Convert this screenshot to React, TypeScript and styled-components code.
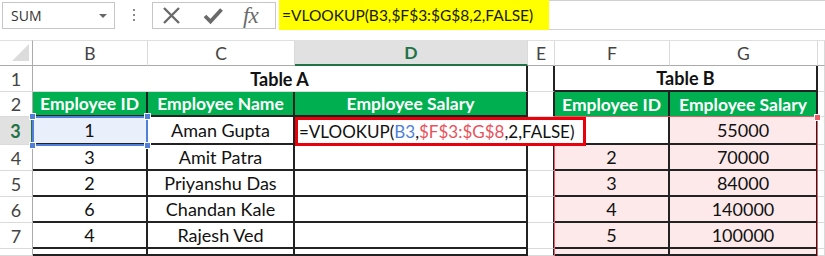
import styled, {createGlobalStyle} from "styled-components";

const GlobalStyle = createGlobalStyle`
  body {
    margin: 0;
    background: #ffffff;
    overflow: hidden;
    font-family: Lato, "Liberation Sans", sans-serif;
  }
`

const Bar = styled.div`
  display: flex;
  height: 30px;
`

const NameBox = styled.div`
  box-sizing: border-box;
  width: 113px;
  height: 27px;
  margin: 2px 0 0 2px;
  border: 1px solid #c6c6c6;
  display: flex;
  align-items: center;
  justify-content: space-between;
  padding: 0 7px 0 8px;
  font-family: "Open Sans", sans-serif;
  font-size: 14px;
  color: #333333;
`

const Caret = styled.span`
  width: 0;
  height: 0;
  border-left: 4px solid transparent;
  border-right: 4px solid transparent;
  border-top: 4px solid #666666;
`

const Grip = styled.div`
  width: 37px;
  display: flex;
  flex-direction: column;
  align-items: center;
  justify-content: center;
  gap: 3px;

  span {
    width: 2px;
    height: 2px;
    background: #8a8a8a;
  }
`

const ActionBox = styled.div`
  box-sizing: border-box;
  width: 124px;
  height: 27px;
  margin-top: 2px;
  border: 1px solid #c6c6c6;
  display: flex;
  align-items: center;
  gap: 22px;
  padding-left: 9px;
`

const Fx = styled.span`
  font-family: "Liberation Serif", serif;
  font-style: italic;
  font-size: 23px;
  line-height: 1;
  color: #6a6a6a;
  letter-spacing: -1px;
  margin-left: -2px;
`

const FormulaInput = styled.div`
  flex: 1;
  margin-left: 3px;
  box-sizing: border-box;
  border-top: 1px solid #d0d0d0;
  border-bottom: 1px solid #d0d0d0;
  display: flex;
`

const Highlight = styled.span`
  background: #ffff00;
  width: 267px;
  margin: -1px 0;
  padding-left: 3px;
  display: flex;
  align-items: center;
  font-size: 15.5px;
  color: #1a1a1a;
`

const Sheet = styled.div`
  margin-top: 10px;
  display: grid;
  grid-template-columns: 33px 115px 147px 233px 27px 115px 148px 1fr;
  grid-template-rows: 26px 26px 25px 28px 26px 26px 26px 26px 7px;
`

const Corner = styled.div`
  box-sizing: border-box;
  grid-column: 1;
  grid-row: 1;
  border-right: 1px solid #ababab;
  border-bottom: 1px solid #ababab;
  border-top: 1px solid #e0e0e0;
  position: relative;

  &::after {
    content: "";
    position: absolute;
    right: 3px;
    bottom: 4px;
    border-left: 17px solid transparent;
    border-bottom: 17px solid #dcdcdc;
  }
`

const ColHead = styled.div<{ $col: number; $active?: boolean }>`
  box-sizing: border-box;
  grid-column: ${p => p.$col};
  grid-row: 1;
  display: flex;
  align-items: center;
  justify-content: center;
  font-size: 17.5px;
  border-top: 1px solid #e0e0e0;
  border-right: 1px solid #dadada;
  border-bottom: ${p => p.$active ? "2px solid #217346" : "1px solid #ababab"};
  background: ${p => p.$active ? "#e1e1e1" : "#ffffff"};
  color: ${p => p.$active ? "#217346" : "#444444"};
  font-weight: ${p => p.$active ? 700 : 400};
`

const RowHead = styled.div<{ $row: number; $active?: boolean }>`
  box-sizing: border-box;
  grid-column: 1;
  grid-row: ${p => p.$row};
  display: flex;
  align-items: center;
  justify-content: center;
  font-size: 18px;
  border-bottom: 1px solid #dadada;
  border-right: ${p => p.$active ? "2px solid #217346" : "1px solid #ababab"};
  background: ${p => p.$active ? "#e1e1e1" : "#ffffff"};
  color: ${p => p.$active ? "#217346" : "#444444"};
  font-weight: ${p => p.$active ? 700 : 400};
`

const GRID = "1px solid #dadada"
const INK = "2px solid #222222"

const Cell = styled.div<{
    $col: number; $row: number; $span?: number; $bg?: string;
    $r?: string; $b?: string; $head?: boolean; $bold?: boolean
}>`
  box-sizing: border-box;
  grid-column: ${p => p.$col} / span ${p => p.$span ?? 1};
  grid-row: ${p => p.$row};
  display: flex;
  align-items: center;
  justify-content: center;
  white-space: nowrap;
  overflow: hidden;
  font-size: ${p => p.$head ? 17.5 : 18}px;
  background: ${p => p.$head ? "#00b050" : p.$bg ?? "#ffffff"};
  color: ${p => p.$head ? "#ffffff" : "#111111"};
  font-weight: ${p => p.$head || p.$bold ? 700 : 400};
  border-right: ${p => p.$r ?? GRID};
  border-bottom: ${p => p.$b ?? GRID};
`

const Selected = styled.div`
  grid-column: 2;
  grid-row: 4;
  border: 2px solid #4f7fd9;
  margin: -1px 0 -1px -1px;
  position: relative;
  z-index: 1;
  pointer-events: none;
`

const Handle = styled.span<{ $x: "left" | "right"; $y: "top" | "bottom" }>`
  position: absolute;
  width: 5px;
  height: 5px;
  background: #4f7fd9;
  border: 1px solid #ffffff;
  ${p => p.$x}: -5px;
  ${p => p.$y}: -5px;
`

const EditBox = styled.div`
  grid-column: 4 / span 2;
  grid-row: 4;
  margin-right: -31px;
  margin-bottom: -1px;
  border: 3px solid #e8000b;
  background: #ffffff;
  position: relative;
  z-index: 2;
  display: flex;
  align-items: center;
  padding-left: 1px;
  font-size: 17px;
  color: #111111;
  white-space: nowrap;
`

const RefB = styled.span`
  color: #4f7fd9;
`

const RefRange = styled.span`
  color: #e8525c;
`

const Range = styled.div`
  grid-column: 6 / span 2;
  grid-row: 4 / span 6;
  border: 1px solid #ee5a66;
  border-bottom: none;
  margin: -1px 0 0 -1px;
  position: relative;
  z-index: 1;
  pointer-events: none;

  &::after {
    content: "";
    position: absolute;
    right: -4px;
    top: -3px;
    width: 5px;
    height: 5px;
    background: #ee5a66;
    border: 1px solid #ffffff;
  }
`

const PINK = "#fde9ea"

const people = [
    {row: "4", id: "3", name: "Amit Patra", bId: "2", pay: "70000"},
    {row: "5", id: "2", name: "Priyanshu Das", bId: "3", pay: "84000"},
    {row: "6", id: "6", name: "Chandan Kale", bId: "4", pay: "140000"},
    {row: "7", id: "4", name: "Rajesh Ved", bId: "5", pay: "100000"},
    {row: "", id: "", name: "", bId: "", pay: ""},
]

function XIcon() {
    return <svg width="19" height="19" viewBox="0 0 19 19">
        <path d="M2 2 L17 17 M17 2 L2 17" stroke="#6a6a6a" strokeWidth="2.4" fill="none"/>
    </svg>
}

function CheckIcon() {
    return <svg width="20" height="18" viewBox="0 0 20 18">
        <path d="M2 9 L7.5 14.5 L18.5 2.5" stroke="#6a6a6a" strokeWidth="3.8" fill="none"/>
    </svg>
}

function App() {
    return <>
        <GlobalStyle/>
        <Bar>
            <NameBox>SUM<Caret/></NameBox>
            <Grip><span/><span/><span/></Grip>
            <ActionBox>
                <XIcon/>
                <CheckIcon/>
                <Fx>fx</Fx>
            </ActionBox>
            <FormulaInput>
                <Highlight>=VLOOKUP(B3,$F$3:$G$8,2,FALSE)</Highlight>
            </FormulaInput>
        </Bar>
        <Sheet>
            <Corner/>
            {["B", "C", "D", "E", "F", "G", ""].map((c, i) =>
                <ColHead key={i} $col={i + 2} $active={c === "D"}>{c}</ColHead>)}

            <RowHead $row={2}>1</RowHead>
            <Cell $col={2} $row={2} $span={3} $bold $r={INK}>Table A</Cell>
            <Cell $col={5} $row={2} $r={INK}/>
            <Cell $col={6} $row={2} $span={2} $bold $r={INK} $b={INK}>Table B</Cell>
            <Cell $col={8} $row={2}/>

            <RowHead $row={3}>2</RowHead>
            <Cell $col={2} $row={3} $head $r={INK} $b={INK}>Employee ID</Cell>
            <Cell $col={3} $row={3} $head $r={INK} $b={INK}>Employee Name</Cell>
            <Cell $col={4} $row={3} $head $r={INK} $b={INK}>Employee Salary</Cell>
            <Cell $col={5} $row={3} $r={INK}/>
            <Cell $col={6} $row={3} $head $r={INK}>Employee ID</Cell>
            <Cell $col={7} $row={3} $head $r={INK}>Employee Salary</Cell>
            <Cell $col={8} $row={3}/>

            <RowHead $row={4} $active>3</RowHead>
            <Cell $col={2} $row={4} $bg="#e9effb" $r={INK} $b={INK}>1</Cell>
            <Cell $col={3} $row={4} $r={INK} $b={INK}>Aman Gupta</Cell>
            <EditBox>=VLOOKUP(<RefB>B3</RefB>,<RefRange>$F$3:$G$8</RefRange>,2,FALSE)</EditBox>
            <Cell $col={6} $row={4} $r={INK} $b={INK}/>
            <Cell $col={7} $row={4} $bg={PINK} $r={INK} $b={INK}>55000</Cell>
            <Cell $col={8} $row={4}/>

            {people.map((p, i) => {
                const row = i + 5
                return [
                    <RowHead key={"h" + i} $row={row}>{p.row}</RowHead>,
                    <Cell key={"b" + i} $col={2} $row={row} $r={INK} $b={INK}>{p.id}</Cell>,
                    <Cell key={"c" + i} $col={3} $row={row} $r={INK} $b={INK}>{p.name}</Cell>,
                    <Cell key={"d" + i} $col={4} $row={row} $r={INK} $b={INK}/>,
                    <Cell key={"e" + i} $col={5} $row={row} $r={INK}/>,
                    <Cell key={"f" + i} $col={6} $row={row} $bg={PINK} $r={INK} $b={INK}>{p.bId}</Cell>,
                    <Cell key={"g" + i} $col={7} $row={row} $bg={PINK} $r={INK} $b={INK}>{p.pay}</Cell>,
                    <Cell key={"x" + i} $col={8} $row={row}/>,
                ]
            })}

            <Selected>
                <Handle $x="left" $y="top"/>
                <Handle $x="right" $y="top"/>
                <Handle $x="left" $y="bottom"/>
                <Handle $x="right" $y="bottom"/>
            </Selected>
            <Range/>
        </Sheet>
    </>
}

export default App
